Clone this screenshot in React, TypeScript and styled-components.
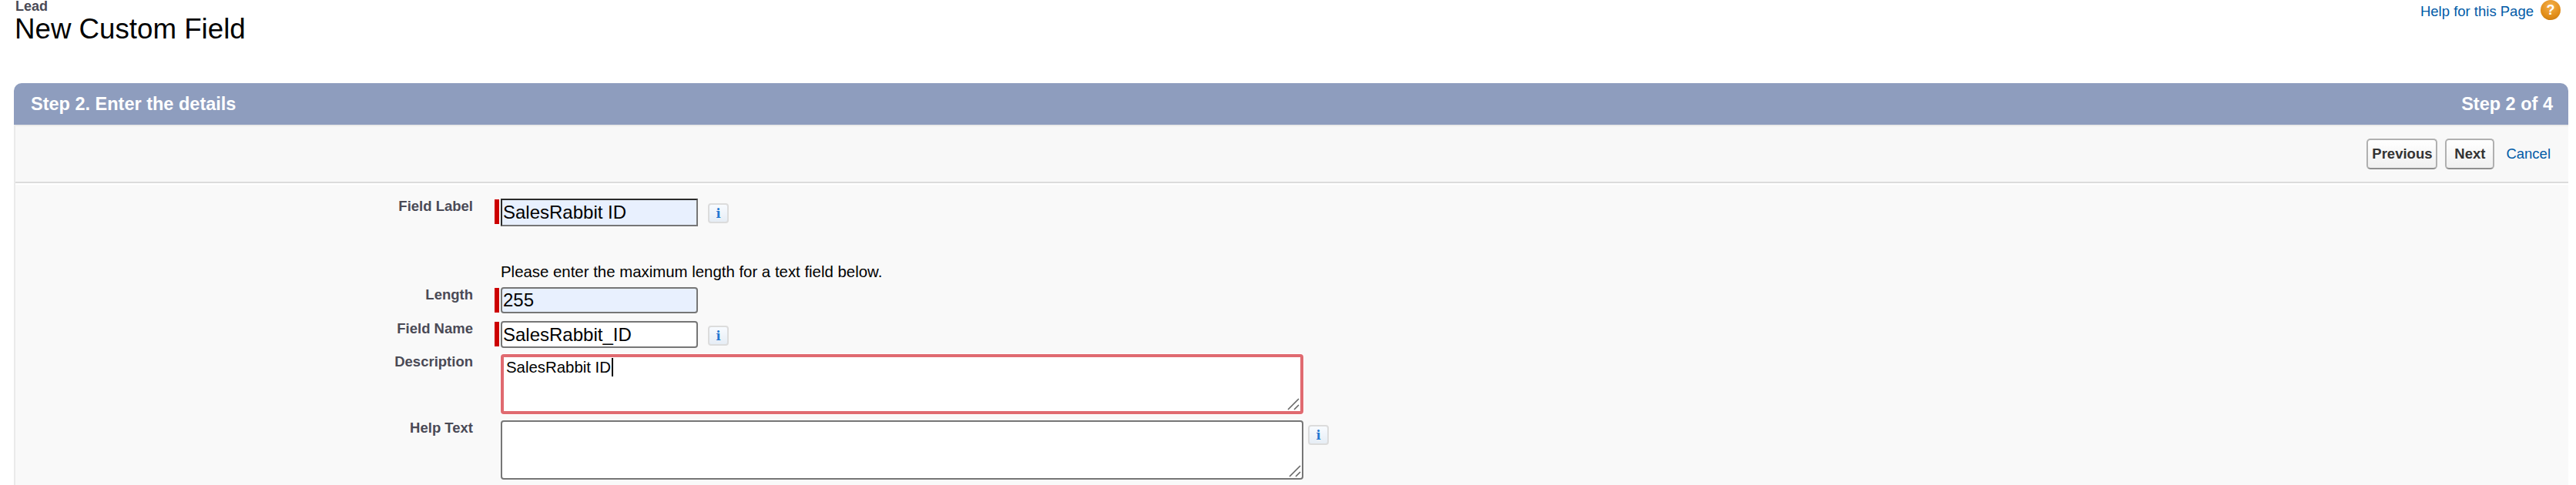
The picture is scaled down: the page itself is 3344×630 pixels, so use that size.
import React from "react";
import styled, { createGlobalStyle } from "styled-components";

const GlobalStyle = createGlobalStyle`
  html, body {
    margin: 0;
    padding: 0;
    background: #fff;
    overflow: hidden;
    font-family: "Liberation Sans", Arial, sans-serif;
  }
`;

const Page = styled.div`
  width: 3344px;
  height: 630px;
  overflow: hidden;
  background: #fff;
`;

const PageHeader = styled.header`
  display: flex;
  justify-content: space-between;
  align-items: flex-start;
  height: 108px;
  padding: 0 20px;
  box-sizing: border-box;
`;

const TitleBlock = styled.div`
  display: flex;
  flex-direction: column;
`;

const ObjectName = styled.div`
  height: 18px;
  color: #4a4a56;
  font-size: 18px;
  font-weight: bold;
  line-height: 16px;
`;

const Title = styled.h1`
  margin: 0 0 0 -1px;
  color: #000;
  font-size: 36.7px;
  font-weight: normal;
  line-height: 40px;
`;

const HelpLink = styled.a`
  display: flex;
  align-items: center;
  gap: 9px;
  height: 26px;
  margin-top: 2px;
  color: #015ba7;
  font-size: 18.5px;
  line-height: 26px;
`;

const HelpIcon = styled.span`
  display: flex;
  align-items: center;
  justify-content: center;
  width: 26px;
  height: 26px;
  margin-top: -4px;
  border-radius: 50%;
  background: radial-gradient(circle at 50% 30%, #f5b04a, #e08b16 65%, #b86f10);
  color: #fff;
  font-size: 18px;
  font-weight: bold;
`;

const Panel = styled.section`
  display: flex;
  flex-direction: column;
  height: 522px;
  margin: 0 10px 0 18px;
`;

const PanelHeader = styled.div`
  display: flex;
  justify-content: space-between;
  align-items: center;
  height: 54px;
  padding: 0 20px 0 22px;
  border-radius: 10px 10px 0 0;
  background: #8e9dbe;
  color: #fff;
  font-size: 23.5px;
  font-weight: bold;
`;

const PanelBody = styled.div`
  flex: 1;
  border-top: 2px solid #eaeaea;
  border-left: 2px solid #eaeaea;
  background: #f8f8f8;
`;

const Toolbar = styled.div`
  display: flex;
  justify-content: flex-end;
  align-items: center;
  height: 72px;
  padding-right: 23px;
  border-bottom: 2px solid #dcdcdc;
`;

const Button = styled.button<{ $width: number }>`
  width: ${(p) => p.$width}px;
  height: 40px;
  margin-right: 10px;
  padding: 0;
  border: 2px solid #b0b0b0;
  border-bottom-color: #8f8f8f;
  border-radius: 5px;
  background: linear-gradient(#ffffff, #f0f0f0);
  color: #333;
  font-family: inherit;
  font-size: 18.5px;
  font-weight: bold;
`;

const CancelLink = styled.a`
  margin-left: 5px;
  color: #015ba7;
  font-size: 18.5px;
`;

const Form = styled.div`
  display: flex;
  flex-direction: column;
  height: 100%;
  padding-top: 18px;
  border-top: 2px solid #fff;
  background: #f9f9f9;
`;

const Row = styled.div<{ $top?: number }>`
  display: flex;
  align-items: flex-start;
  margin-top: ${(p) => p.$top ?? 0}px;
`;

const Label = styled.label`
  flex: none;
  width: 594px;
  color: #4a4a56;
  font-size: 18.5px;
  font-weight: bold;
  line-height: 20px;
  text-align: right;
`;

const RequiredSlot = styled.div<{ $on?: boolean }>`
  flex: none;
  width: 6px;
  height: 32px;
  margin: 1px 2px 0 28px;
  background: ${(p) => (p.$on ? "#c00" : "transparent")};
`;

const Input = styled.input<{ $height: number; $filled?: boolean; $focused?: boolean }>`
  width: 256px;
  height: ${(p) => p.$height}px;
  margin: 0;
  padding: 0 1px;
  box-sizing: border-box;
  border: 2px solid #767676;
  border-color: ${(p) => (p.$focused ? "#2b2b2b #767676 #767676 #2b2b2b" : "#767676")};
  border-radius: ${(p) => (p.$focused ? "0" : "4px")};
  background: ${(p) => (p.$filled ? "#e8f0fe" : "#fff")};
  color: #000;
  font-family: inherit;
  font-size: 24px;
  outline: none;
`;

const InfoButton = styled.span<{ $gap: number }>`
  display: flex;
  align-items: center;
  justify-content: center;
  flex: none;
  width: 27px;
  height: 26px;
  margin: 6px 0 0 ${(p) => p.$gap}px;
  box-sizing: border-box;
  border: 2px solid #dcdcdc;
  border-radius: 4px;
  background: linear-gradient(#f8fbff, #e6edf5);
  color: #1f78d1;
  font-family: "DejaVu Serif", "Liberation Serif", serif;
  font-size: 16px;
  font-weight: bold;
`;

const Note = styled.div`
  margin: 47px 0 0 630px;
  color: #000;
  font-size: 20.4px;
  line-height: 24px;
`;

const TextBox = styled.div<{ $height: number; $active?: boolean }>`
  position: relative;
  width: 1042px;
  height: ${(p) => p.$height}px;
  box-sizing: border-box;
  padding: 0 3px;
  border: ${(p) => (p.$active ? "4px solid #e06a70" : "2px solid #767676")};
  border-radius: 4px;
  background: #fff;
  box-shadow: ${(p) => (p.$active ? "0 0 0 1px #fff" : "none")};
  color: #000;
  font-size: 20.4px;
  line-height: 26px;
`;

const Caret = styled.span`
  display: inline-block;
  width: 2px;
  height: 24px;
  margin-left: 1px;
  vertical-align: -5px;
  background: #000;
`;

const Grip = styled.svg`
  position: absolute;
  right: 1px;
  bottom: 1px;
  width: 16px;
  height: 16px;
`;

const ResizeGrip = () => (
  <Grip viewBox="0 0 16 16">
    <path d="M1 15 L15 1 M9 15 L15 9" stroke="#666" strokeWidth="1.6" fill="none" />
  </Grip>
);

export default function App() {
  return (
    <Page>
      <GlobalStyle />
      <PageHeader>
        <TitleBlock>
          <ObjectName>Lead</ObjectName>
          <Title>New Custom Field</Title>
        </TitleBlock>
        <HelpLink>
          Help for this Page
          <HelpIcon>?</HelpIcon>
        </HelpLink>
      </PageHeader>
      <Panel>
        <PanelHeader>
          <span>Step 2. Enter the details</span>
          <span>Step 2 of 4</span>
        </PanelHeader>
        <PanelBody>
          <Toolbar>
            <Button $width={92}>Previous</Button>
            <Button $width={64}>Next</Button>
            <CancelLink>Cancel</CancelLink>
          </Toolbar>
          <Form>
            <Row>
              <Label>Field Label</Label>
              <RequiredSlot $on />
              <Input $height={36} $filled $focused readOnly value="SalesRabbit ID" />
              <InfoButton $gap={13}>i</InfoButton>
            </Row>
            <Note>Please enter the maximum length for a text field below.</Note>
            <Row $top={8}>
              <Label>Length</Label>
              <RequiredSlot $on />
              <Input $height={34} $filled readOnly value="255" />
            </Row>
            <Row $top={10}>
              <Label>Field Name</Label>
              <RequiredSlot $on />
              <Input $height={35} readOnly value="SalesRabbit_ID" />
              <InfoButton $gap={13}>i</InfoButton>
            </Row>
            <Row $top={8}>
              <Label>Description</Label>
              <RequiredSlot />
              <TextBox $height={78} $active>
                SalesRabbit ID
                <Caret />
                <ResizeGrip />
              </TextBox>
            </Row>
            <Row $top={8}>
              <Label>Help Text</Label>
              <RequiredSlot />
              <TextBox $height={77}>
                <ResizeGrip />
              </TextBox>
              <InfoButton $gap={6}>i</InfoButton>
            </Row>
          </Form>
        </PanelBody>
      </Panel>
    </Page>
  );
}
